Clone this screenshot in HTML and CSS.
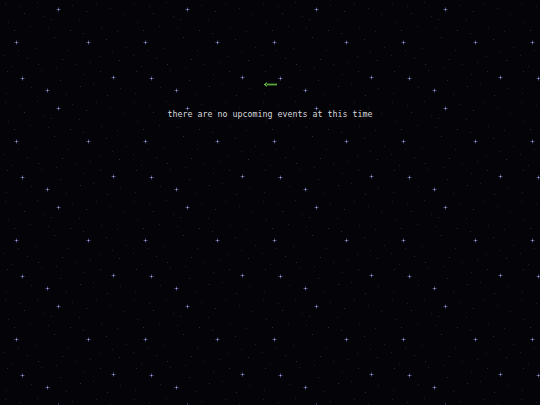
FILE: index.html
```html
<!DOCTYPE html>
<html lang="en">
<head>
<meta charset="utf-8">
<title>Events</title>
<link rel="stylesheet" href="styles.css">
</head>
<body>
<svg class="sky" xmlns="http://www.w3.org/2000/svg" width="540" height="405" aria-hidden="true">
  <defs>
    <g id="star">
      <rect x="-2" y="0" width="5" height="1" fill="#252640"/>
      <rect x="0" y="-2" width="1" height="5" fill="#252640"/>
      <rect x="-1" y="0" width="3" height="1" fill="#474a78"/>
      <rect x="0" y="-1" width="1" height="3" fill="#474a78"/>
      <rect x="0" y="0" width="1" height="1" fill="#a6aadc"/>
    </g>
    <pattern id="tile" width="129" height="99" patternUnits="userSpaceOnUse">
      <use href="#star" x="58" y="9"/>
      <use href="#star" x="16" y="42"/>
      <use href="#star" x="88" y="42"/>
      <use href="#star" x="22" y="78"/>
      <use href="#star" x="113" y="77"/>
      <use href="#star" x="47" y="90"/>
      <g fill="#1f1d2e">
        <rect x="5" y="3" width="1" height="1"/>
        <rect x="20" y="6" width="1" height="1"/>
        <rect x="37" y="2" width="1" height="1"/>
        <rect x="72" y="5" width="1" height="1"/>
        <rect x="96" y="3" width="1" height="1"/>
        <rect x="110" y="8" width="1" height="1"/>
        <rect x="123" y="14" width="1" height="1"/>
        <rect x="8" y="22" width="1" height="1"/>
        <rect x="30" y="26" width="1" height="1"/>
        <rect x="44" y="16" width="1" height="1"/>
        <rect x="79" y="20" width="1" height="1"/>
        <rect x="101" y="27" width="1" height="1"/>
        <rect x="117" y="31" width="1" height="1"/>
        <rect x="4" y="55" width="1" height="1"/>
        <rect x="35" y="48" width="1" height="1"/>
        <rect x="68" y="50" width="1" height="1"/>
        <rect x="99" y="56" width="1" height="1"/>
        <rect x="126" y="47" width="1" height="1"/>
        <rect x="12" y="66" width="1" height="1"/>
        <rect x="41" y="70" width="1" height="1"/>
        <rect x="75" y="64" width="1" height="1"/>
        <rect x="93" y="84" width="1" height="1"/>
        <rect x="120" y="88" width="1" height="1"/>
        <rect x="6" y="93" width="1" height="1"/>
        <rect x="31" y="87" width="1" height="1"/>
        <rect x="66" y="94" width="1" height="1"/>
        <rect x="48" y="28" width="1" height="1"/>
        <rect x="90" y="62" width="1" height="1"/>
        <rect x="18" y="50" width="1" height="1"/>
        <rect x="112" y="52" width="1" height="1"/>
        <rect x="56" y="68" width="1" height="1"/>
        <rect x="84" y="74" width="1" height="1"/>
      </g>
      <g fill="#33222c">
        <rect x="51" y="19" width="1" height="1"/>
        <rect x="100" y="71" width="1" height="1"/>
        <rect x="7" y="71" width="1" height="1"/>
        <rect x="83" y="33" width="1" height="1"/>
        <rect x="60" y="80" width="1" height="1"/>
        <rect x="106" y="39" width="1" height="1"/>
        <rect x="27" y="58" width="1" height="1"/>
      </g>
      <g fill="#2a2c42">
        <rect x="62" y="59" width="1" height="1"/>
        <rect x="24" y="13" width="1" height="1"/>
        <rect x="119" y="60" width="1" height="1"/>
        <rect x="86" y="11" width="1" height="1"/>
        <rect x="54" y="37" width="1" height="1"/>
        <rect x="14" y="30" width="1" height="1"/>
        <rect x="80" y="86" width="1" height="1"/>
        <rect x="107" y="95" width="1" height="1"/>
        <rect x="38" y="64" width="1" height="1"/>
        <rect x="70" y="30" width="1" height="1"/>
      </g>
    </pattern>
  </defs>
  <rect width="540" height="405" fill="url(#tile)"/>
</svg>
<main class="page">
  <a class="back" href="#" aria-label="back">
    <svg class="back-icon" xmlns="http://www.w3.org/2000/svg" width="13" height="7" viewBox="0 0 13 7">
      <rect x="3" y="3" width="10" height="1" fill="#5aa83a"/>
      <rect x="3" y="2" width="10" height="1" fill="#23441a"/>
      <rect x="3" y="4" width="10" height="1" fill="#23441a"/>
      <rect x="0" y="3" width="2" height="1" fill="#70c44a"/>
      <rect x="1" y="2" width="2" height="1" fill="#55a037"/>
      <rect x="1" y="4" width="2" height="1" fill="#55a037"/>
      <rect x="2" y="1" width="1" height="1" fill="#356a25"/>
      <rect x="2" y="5" width="1" height="1" fill="#356a25"/>
    </svg>
  </a>
  <p class="message">there are no upcoming events at this time</p>
</main>
</body>
</html>
```

FILE: styles.css
```css
html, body {
  margin: 0;
  padding: 0;
}

body {
  width: 540px;
  height: 405px;
  overflow: hidden;
  background-color: #040307;
  position: relative;
  font-family: "DejaVu Sans Mono", "Liberation Mono", monospace;
}

.sky {
  position: absolute;
  left: 0;
  top: 0;
  z-index: 0;
}

.page {
  position: relative;
  z-index: 1;
  display: flex;
  flex-direction: column;
  align-items: center;
  padding-top: 81px;
}

.back {
  display: block;
  width: 13px;
  height: 7px;
  line-height: 0;
}

.back-icon {
  display: block;
}

.message {
  margin: 21px 0 0;
  color: #d8d8de;
  font-size: 8.3px;
  line-height: 10px;
  letter-spacing: 0;
  white-space: nowrap;
}
```
